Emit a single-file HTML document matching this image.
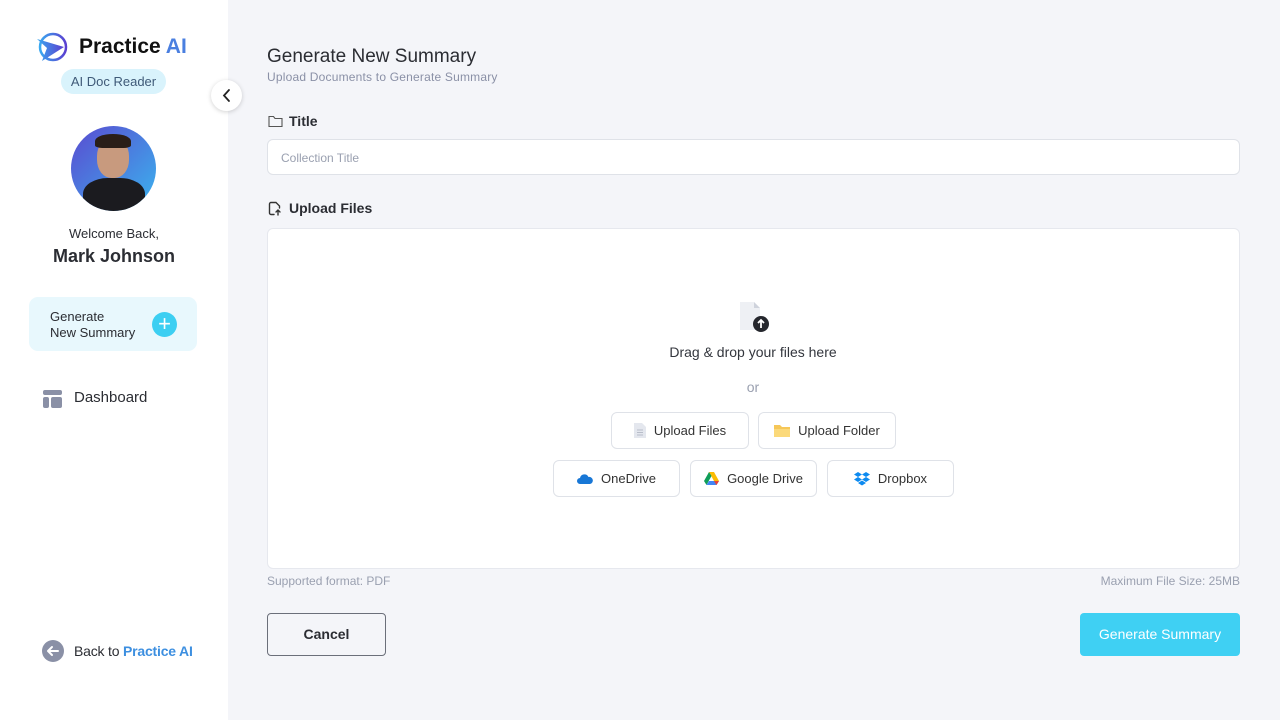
<!DOCTYPE html>
<html><head><meta charset="utf-8"><style>
*{box-sizing:border-box;margin:0;padding:0}
body{width:1280px;height:720px;overflow:hidden;background:#f4f5f9;font-family:"Liberation Sans",sans-serif;color:#2b2d33;position:relative}
.side{position:absolute;left:0;top:0;width:228px;height:720px;background:#fff}
.abs{position:absolute}
.btn{position:absolute;background:#fff;border:1px solid #dfe2e8;border-radius:6px;font-size:13px;color:#333;display:flex;align-items:center;justify-content:center;gap:8px}
</style></head><body>
<div class="side">
  <svg class="abs" style="left:34px;top:31px" width="36" height="34" viewBox="0 0 36 34">
    <defs><linearGradient id="g" x1="0" x2="1"><stop offset="0" stop-color="#3aa8f0"/><stop offset="1" stop-color="#5a3fd0"/></linearGradient></defs>
    <circle cx="19" cy="16" r="13" fill="none" stroke="url(#g)" stroke-width="2.5"/>
    <path d="M3 8 L30 16 L8 30 L13 17 Z" fill="url(#g)"/>
  </svg>
  <div class="abs" style="left:79px;top:35px;font-size:21px;font-weight:bold;color:#111">Practice <span style="color:#4a7fe0">AI</span></div>
  <div class="abs" style="left:61px;top:69px;width:105px;height:25px;border-radius:13px;background:#d9f3fc;color:#3f5a78;font-size:13px;text-align:center;line-height:25px">AI Doc Reader</div>
  <div class="abs" style="left:71px;top:126px;width:85px;height:85px;border-radius:50%;background:linear-gradient(135deg,#5a4ad0,#3ab5ef);overflow:hidden">
    <div class="abs" style="left:26px;top:12px;width:32px;height:40px;border-radius:45%;background:#c89a7e"></div>
    <div class="abs" style="left:24px;top:8px;width:36px;height:14px;border-radius:50% 50% 20% 20%;background:#2a1e18"></div>
    <div class="abs" style="left:12px;top:52px;width:62px;height:40px;border-radius:40% 40% 0 0;background:#1b1b1f"></div>
  </div>
  <div class="abs" style="left:0;width:228px;top:226px;text-align:center;font-size:13px">Welcome Back,</div>
  <div class="abs" style="left:0;width:228px;top:246px;text-align:center;font-size:18px;font-weight:bold;color:#2b2d33">Mark Johnson</div>
  <div class="abs" style="left:29px;top:297px;width:168px;height:54px;border-radius:9px;background:#e8f8fd"></div>
  <div class="abs" style="left:50px;top:309px;font-size:13px;line-height:16px;color:#2b2d33">Generate<br>New Summary</div>
  <div class="abs" style="left:152px;top:312px;width:25px;height:25px;border-radius:50%;background:#3ccff2;color:#fff;font-size:22px;text-align:center;line-height:24px">+</div>
  <svg class="abs" style="left:43px;top:390px" width="19" height="18" viewBox="0 0 19 18"><rect x="0" y="0" width="19" height="5" rx="2" fill="#8a90a6"/><rect x="0" y="7" width="6" height="11" rx="2" fill="#8a90a6"/><rect x="8" y="7" width="11" height="11" rx="2" fill="#8a90a6"/></svg>
  <div class="abs" style="left:74px;top:389px;font-size:15px;color:#2b2d33">Dashboard</div>
  <div class="abs" style="left:42px;top:640px;width:22px;height:22px;border-radius:50%;background:#8a90a6"></div>
  <svg class="abs" style="left:42px;top:640px" width="22" height="22" viewBox="0 0 22 22"><path d="M16 11H6M10 7l-4 4 4 4" stroke="#fff" stroke-width="2" fill="none" stroke-linecap="round" stroke-linejoin="round"/></svg>
  <div class="abs" style="left:74px;top:643px;font-size:14px;letter-spacing:-0.2px">Back to <b style="color:#3d8fe0">Practice AI</b></div>
</div>
<div class="abs" style="left:211px;top:80px;width:31px;height:31px;border-radius:50%;background:#fff;box-shadow:0 1px 5px rgba(0,0,0,.18)"></div>
<svg class="abs" style="left:211px;top:80px" width="31" height="31"><path d="M18 10l-5 5.5 5 5.5" stroke="#222" stroke-width="1.8" fill="none" stroke-linecap="round"/></svg>

<div class="abs" style="left:267px;top:46px;font-size:19px;color:#2b2d33">Generate New Summary</div>
<div class="abs" style="left:267px;top:70px;font-size:12px;color:#8a90a6;letter-spacing:0.2px">Upload Documents to Generate Summary</div>
<svg class="abs" style="left:268px;top:115px" width="15" height="13" viewBox="0 0 15 13"><path d="M1 2.5V11.5H14V3.5H7L5.5 1.5H1Z" stroke="#555" fill="none" stroke-width="1.1"/></svg>
<div class="abs" style="left:289px;top:113px;font-size:14px;font-weight:bold">Title</div>
<div class="abs" style="left:267px;top:139px;width:973px;height:36px;background:#fff;border:1px solid #dfe2e8;border-radius:6px;font-size:12px;color:#9aa0b0;padding:11px 13px">Collection Title</div>
<svg class="abs" style="left:268px;top:201px" width="14" height="15" viewBox="0 0 14 15"><path d="M8 1.5H3a1.5 1.5 0 0 0-1.5 1.5v9A1.5 1.5 0 0 0 3 13.5h3M8 1.5l3.5 3.5v2M10 14V9M8 11l2-2 2 2" stroke="#333" fill="none" stroke-width="1.4" stroke-linecap="round"/></svg>
<div class="abs" style="left:289px;top:200px;font-size:14px;font-weight:bold">Upload Files</div>
<div class="abs" style="left:267px;top:228px;width:973px;height:341px;background:#fff;border:1px solid #e6e8ee;border-radius:6px"></div>
<svg class="abs" style="left:740px;top:302px" width="32" height="32" viewBox="0 0 32 32"><path d="M0 0H14L20 6V28H0Z" fill="#eef0f4"/><path d="M14 0L20 6H14Z" fill="#cfd3dc"/><circle cx="21" cy="22" r="8" fill="#25272d"/><path d="M21 26V18M18 21l3-3 3 3" stroke="#fff" stroke-width="1.8" fill="none"/></svg>
<div class="abs" style="left:553px;width:400px;top:344px;text-align:center;font-size:14px;color:#33363d">Drag &amp; drop your files here</div>
<div class="abs" style="left:553px;width:400px;top:379px;text-align:center;font-size:14px;color:#9aa0b0">or</div>
<div class="btn" style="left:611px;top:412px;width:138px;height:37px"><svg width="12" height="15"><path d="M0 0H8L12 4V15H0Z" fill="#e4e7ee"/><path d="M3 7h6M3 9.5h6M3 12h6" stroke="#b8bdc9"/></svg>Upload Files</div>
<div class="btn" style="left:758px;top:412px;width:138px;height:37px"><svg width="16" height="13"><path d="M0 1h6l2 2h8v10H0Z" fill="#f6c758"/><path d="M0 5h16v8H0Z" fill="#fbd97a"/></svg>Upload Folder</div>
<div class="btn" style="left:553px;top:460px;width:127px;height:37px"><svg width="16" height="10"><path d="M3 10a3 3 0 0 1 0-6 4.5 4.5 0 0 1 8.5-1A3.5 3.5 0 0 1 13 10Z" fill="#1877d6"/></svg>OneDrive</div>
<div class="btn" style="left:690px;top:460px;width:127px;height:37px"><svg width="15" height="13" viewBox="0 0 15 13"><path d="M5 0h5l5 9h-5Z" fill="#fbbc04"/><path d="M5 0L0 9l2.5 4L7.5 4Z" fill="#0f9d58"/><path d="M2.5 13h10l2.5-4H5Z" fill="#4285f4"/><path d="M10 9h5l-2.5 4Z" fill="#ea4335"/></svg>Google Drive</div>
<div class="btn" style="left:827px;top:460px;width:127px;height:37px"><svg width="16" height="14" viewBox="0 0 16 14"><path d="M4 0l4 2.5-4 2.5-4-2.5ZM12 0l4 2.5-4 2.5-4-2.5ZM4 5l4 2.5-4 2.5-4-2.5ZM12 5l4 2.5-4 2.5-4-2.5ZM8 8.5l4 2.5-4 2.5-4-2.5Z" fill="#0d8af0"/></svg>Dropbox</div>
<div class="abs" style="left:267px;top:574px;font-size:12px;color:#9aa0b0">Supported format: PDF</div>
<div class="abs" style="left:1040px;width:200px;text-align:right;top:574px;font-size:12px;color:#9aa0b0">Maximum File Size: 25MB</div>
<div class="abs" style="left:267px;top:613px;width:119px;height:43px;border:1px solid #6b6f7a;border-radius:4px;font-size:14px;font-weight:bold;text-align:center;line-height:41px;color:#2b2d33">Cancel</div>
<div class="abs" style="left:1080px;top:613px;width:160px;height:43px;background:#3fd0f3;border-radius:4px;font-size:14px;text-align:center;line-height:43px;color:#fff">Generate Summary</div>
</body></html>
